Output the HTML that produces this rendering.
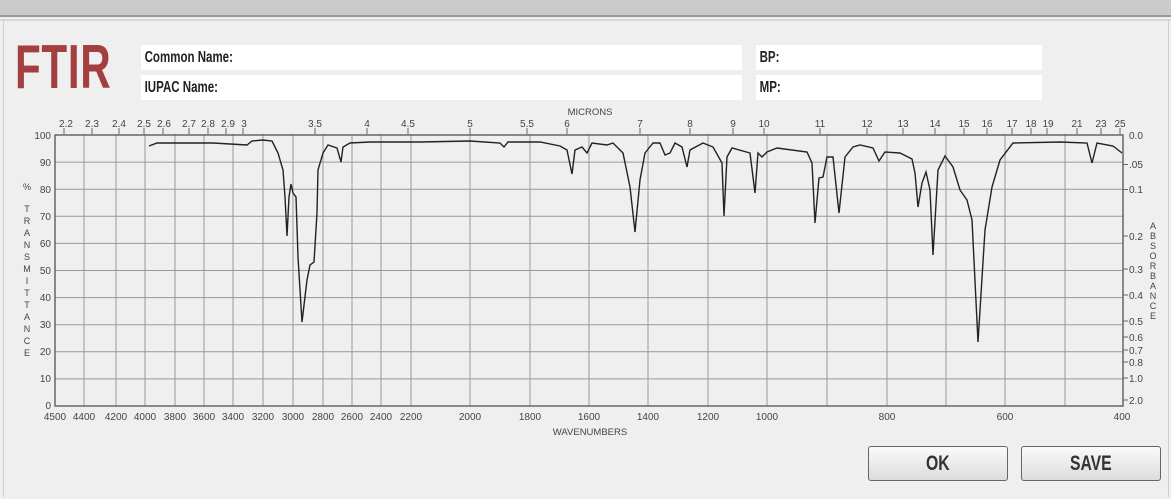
<!DOCTYPE html>
<html><head><meta charset="utf-8"><style>
body{margin:0;width:1171px;height:499px;background:#efefef;overflow:hidden;font-family:"Liberation Sans",sans-serif;position:relative}
.top{position:absolute;left:0;top:0;width:1171px;height:15px;background:#cbcbcb;border-bottom:2px solid #9a9a9a}
.line2{position:absolute;left:0;top:19px;width:1171px;height:2px;background:#d6d6d6}
.frame{position:absolute;left:3px;top:21px;width:1164px;height:476px;border-left:1px solid #cfcfcf;border-right:1px solid #cfcfcf}
.ftir{position:absolute;left:15px;top:32px;font:bold 62px "Liberation Sans",sans-serif;color:#a33f3e;transform:scaleX(0.68);transform-origin:0 0;letter-spacing:1px}
.box{position:absolute;background:#fff;height:25px;font:bold 16px "Liberation Sans",sans-serif;color:#222;line-height:25px}
.box span{display:inline-block;transform:scaleX(0.72);transform-origin:0 0;padding-left:5px}
.btn{position:absolute;top:446px;width:138px;height:33px;border:1px solid #666;border-radius:3px;background:linear-gradient(#fafafa,#dcdcdc);font:bold 21px "Liberation Sans",sans-serif;color:#333;text-align:center;line-height:33px}
.btn span{display:inline-block;transform:scaleX(0.75)}
</style></head><body>
<div class="top"></div><div class="line2"></div><div class="frame"></div>
<div class="ftir">FTIR</div>
<div class="box" style="left:141px;top:45px;width:601px"><span>Common Name:</span></div>
<div class="box" style="left:141px;top:75px;width:601px"><span>IUPAC Name:</span></div>
<div class="box" style="left:756px;top:45px;width:286px"><span>BP:</span></div>
<div class="box" style="left:756px;top:75px;width:286px"><span>MP:</span></div>
<svg style="position:absolute;left:0;top:0" width="1171" height="499" font-family="Liberation Sans, sans-serif" font-size="10" fill="#444">
<g stroke="#999" stroke-width="1">
<line x1="84" y1="134" x2="84" y2="406"/><line x1="116" y1="134" x2="116" y2="406"/><line x1="145" y1="134" x2="145" y2="406"/><line x1="175" y1="134" x2="175" y2="406"/><line x1="204" y1="134" x2="204" y2="406"/><line x1="233" y1="134" x2="233" y2="406"/><line x1="263" y1="134" x2="263" y2="406"/><line x1="293" y1="134" x2="293" y2="406"/><line x1="323" y1="134" x2="323" y2="406"/><line x1="352" y1="134" x2="352" y2="406"/><line x1="381" y1="134" x2="381" y2="406"/><line x1="411" y1="134" x2="411" y2="406"/><line x1="470" y1="134" x2="470" y2="406"/><line x1="530" y1="134" x2="530" y2="406"/><line x1="589" y1="134" x2="589" y2="406"/><line x1="648" y1="134" x2="648" y2="406"/><line x1="708" y1="134" x2="708" y2="406"/><line x1="767" y1="134" x2="767" y2="406"/><line x1="827" y1="134" x2="827" y2="406"/><line x1="887" y1="134" x2="887" y2="406"/><line x1="946" y1="134" x2="946" y2="406"/><line x1="1005" y1="134" x2="1005" y2="406"/><line x1="1065" y1="134" x2="1065" y2="406"/>
<line x1="55" y1="162.1" x2="1123" y2="162.1"/><line x1="55" y1="189.2" x2="1123" y2="189.2"/><line x1="55" y1="216.3" x2="1123" y2="216.3"/><line x1="55" y1="243.4" x2="1123" y2="243.4"/><line x1="55" y1="270.5" x2="1123" y2="270.5"/><line x1="55" y1="297.6" x2="1123" y2="297.6"/><line x1="55" y1="324.7" x2="1123" y2="324.7"/><line x1="55" y1="351.8" x2="1123" y2="351.8"/><line x1="55" y1="378.9" x2="1123" y2="378.9"/>
</g>
<rect x="55" y="135" width="1068" height="271" fill="none" stroke="#666" stroke-width="1.5"/>
<g stroke="#666" stroke-width="1">
<line x1="64" y1="128" x2="64" y2="134"/><line x1="92" y1="128" x2="92" y2="134"/><line x1="119" y1="128" x2="119" y2="134"/><line x1="144" y1="128" x2="144" y2="134"/><line x1="163" y1="128" x2="163" y2="134"/><line x1="189" y1="128" x2="189" y2="134"/><line x1="208" y1="128" x2="208" y2="134"/><line x1="226" y1="128" x2="226" y2="134"/><line x1="243" y1="128" x2="243" y2="134"/><line x1="315" y1="128" x2="315" y2="134"/><line x1="367" y1="128" x2="367" y2="134"/><line x1="408" y1="128" x2="408" y2="134"/><line x1="470" y1="128" x2="470" y2="134"/><line x1="527" y1="128" x2="527" y2="134"/><line x1="567" y1="128" x2="567" y2="134"/><line x1="640" y1="128" x2="640" y2="134"/><line x1="690" y1="128" x2="690" y2="134"/><line x1="733" y1="128" x2="733" y2="134"/><line x1="764" y1="128" x2="764" y2="134"/><line x1="820" y1="128" x2="820" y2="134"/><line x1="867" y1="128" x2="867" y2="134"/><line x1="903" y1="128" x2="903" y2="134"/><line x1="935" y1="128" x2="935" y2="134"/><line x1="964" y1="128" x2="964" y2="134"/><line x1="987" y1="128" x2="987" y2="134"/><line x1="1012" y1="128" x2="1012" y2="134"/><line x1="1031" y1="128" x2="1031" y2="134"/><line x1="1047" y1="128" x2="1047" y2="134"/><line x1="1077" y1="128" x2="1077" y2="134"/><line x1="1101" y1="128" x2="1101" y2="134"/><line x1="1120" y1="128" x2="1120" y2="134"/>
<line x1="1123" y1="164.5" x2="1128" y2="164.5"/><line x1="1123" y1="189.5" x2="1128" y2="189.5"/><line x1="1123" y1="236" x2="1128" y2="236"/><line x1="1123" y1="269" x2="1128" y2="269"/><line x1="1123" y1="295" x2="1128" y2="295"/><line x1="1123" y1="321" x2="1128" y2="321"/><line x1="1123" y1="337" x2="1128" y2="337"/><line x1="1123" y1="350" x2="1128" y2="350"/><line x1="1123" y1="362" x2="1128" y2="362"/><line x1="1123" y1="378" x2="1128" y2="378"/><line x1="1123" y1="400" x2="1128" y2="400"/>
</g>
<g text-anchor="middle">
<text x="66" y="127">2.2</text><text x="92" y="127">2.3</text><text x="119" y="127">2.4</text><text x="144" y="127">2.5</text><text x="164" y="127">2.6</text><text x="189" y="127">2.7</text><text x="208" y="127">2.8</text><text x="228" y="127">2.9</text><text x="244" y="127">3</text><text x="315" y="127">3.5</text><text x="367" y="127">4</text><text x="408" y="127">4.5</text><text x="470" y="127">5</text><text x="527" y="127">5.5</text><text x="567" y="127">6</text><text x="640" y="127">7</text><text x="690" y="127">8</text><text x="733" y="127">9</text><text x="764" y="127">10</text><text x="820" y="127">11</text><text x="867" y="127">12</text><text x="903" y="127">13</text><text x="935" y="127">14</text><text x="964" y="127">15</text><text x="987" y="127">16</text><text x="1012" y="127">17</text><text x="1031" y="127">18</text><text x="1048" y="127">19</text><text x="1077" y="127">21</text><text x="1101" y="127">23</text><text x="1120" y="127">25</text>
<text x="590" y="115" font-size="9.5">MICRONS</text>
<text x="590" y="435" font-size="9.5">WAVENUMBERS</text>
<text x="55" y="420">4500</text><text x="84" y="420">4400</text><text x="116" y="420">4200</text><text x="145" y="420">4000</text><text x="175" y="420">3800</text><text x="204" y="420">3600</text><text x="233" y="420">3400</text><text x="263" y="420">3200</text><text x="293" y="420">3000</text><text x="323" y="420">2800</text><text x="352" y="420">2600</text><text x="381" y="420">2400</text><text x="411" y="420">2200</text><text x="470" y="420">2000</text><text x="530" y="420">1800</text><text x="589" y="420">1600</text><text x="648" y="420">1400</text><text x="708" y="420">1200</text><text x="767" y="420">1000</text><text x="887" y="420">800</text><text x="1005" y="420">600</text><text x="1122" y="420">400</text>
</g>
<g text-anchor="end">
<text x="51" y="139">100</text><text x="51" y="166">90</text><text x="51" y="193">80</text><text x="51" y="220">70</text><text x="51" y="247">60</text><text x="51" y="274">50</text><text x="51" y="301">40</text><text x="51" y="328">30</text><text x="51" y="355">20</text><text x="51" y="382">10</text><text x="51" y="409">0</text>
</g>
<g font-size="10">
<text x="1129" y="139">0.0</text><text x="1129" y="168">.05</text><text x="1129" y="193">0.1</text><text x="1129" y="240">0.2</text><text x="1129" y="273">0.3</text><text x="1129" y="299">0.4</text><text x="1129" y="325">0.5</text><text x="1129" y="341">0.6</text><text x="1129" y="354">0.7</text><text x="1129" y="366">0.8</text><text x="1129" y="382">1.0</text><text x="1129" y="404">2.0</text>
</g>
<g font-size="9" text-anchor="middle">
<text x="27" y="190">%</text>
<text x="27" y="212">T</text><text x="27" y="224">R</text><text x="27" y="236">A</text><text x="27" y="248">N</text><text x="27" y="260">S</text><text x="27" y="272">M</text><text x="27" y="284">I</text><text x="27" y="296">T</text><text x="27" y="308">T</text><text x="27" y="320">A</text><text x="27" y="332">N</text><text x="27" y="344">C</text><text x="27" y="356">E</text>
<text x="1153" y="229">A</text><text x="1153" y="239">B</text><text x="1153" y="249">S</text><text x="1153" y="259">O</text><text x="1153" y="269">R</text><text x="1153" y="279">B</text><text x="1153" y="289">A</text><text x="1153" y="299">N</text><text x="1153" y="309">C</text><text x="1153" y="319">E</text>
</g>
<path fill="none" stroke="#222" stroke-width="1.4" d="M149,146 L157,143 L213,143 L247,145 L252,141 L263,140 L272,141 L278,153 L283,170 L285,197 L287,236 L289,197 L291,184 L293,193 L296,197 L298,257 L302,322 L307,280 L310,265 L314,262 L317,213 L318,170 L323,153 L328,145 L337,148 L341,162 L343,147 L350,143 L370,142 L420,142 L470,141 L500,143 L504,147 L508,142 L540,142 L560,146 L567,150 L572,174 L575,150 L582,147 L587,153 L592,143 L607,145 L613,143 L623,153 L630,187 L635,232 L640,180 L645,153 L653,143 L660,143 L665,155 L670,153 L675,143 L682,147 L687,167 L690,150 L703,143 L713,147 L722,163 L724,216 L727,157 L732,148 L750,153 L755,193 L758,153 L762,157 L767,152 L777,148 L807,152 L812,163 L815,223 L819,178 L823,177 L827,157 L833,157 L839,213 L845,157 L853,147 L860,145 L873,148 L879,161 L885,152 L900,153 L912,159 L915,173 L918,207 L922,183 L926,172 L930,190 L933,255 L938,170 L945,156 L953,167 L960,190 L967,200 L972,220 L978,342 L985,230 L992,187 L1000,160 L1013,143 L1060,142 L1087,143 L1092,163 L1097,143 L1113,146 L1122,153"/>
</svg>
<div class="btn" style="left:868px"><span>OK</span></div>
<div class="btn" style="left:1021px"><span>SAVE</span></div>
</body></html>
